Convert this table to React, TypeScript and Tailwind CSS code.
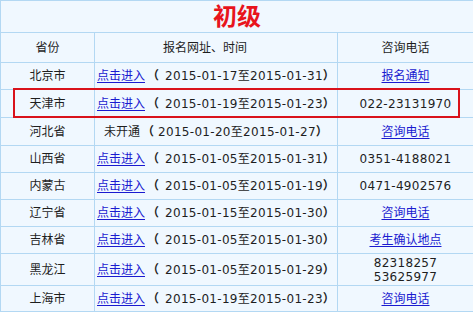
import React from "react";

type Row = {
  province: string;
  open: boolean;
  start: string;
  end: string;
  phone: string[];
  phoneLink?: boolean;
  h: string;
};

const ROWS: Row[] = [
  { province: "北京市", open: true, start: "2015-01-17", end: "2015-01-31", phone: ["报名通知"], phoneLink: true, h: "h-[27px]" },
  { province: "天津市", open: true, start: "2015-01-19", end: "2015-01-23", phone: ["022-23131970"], h: "h-[28px]" },
  { province: "河北省", open: false, start: "2015-01-20", end: "2015-01-27", phone: ["咨询电话"], phoneLink: true, h: "h-[28px]" },
  { province: "山西省", open: true, start: "2015-01-05", end: "2015-01-31", phone: ["0351-4188021"], h: "h-[27px]" },
  { province: "内蒙古", open: true, start: "2015-01-05", end: "2015-01-19", phone: ["0471-4902576"], h: "h-[27px]" },
  { province: "辽宁省", open: true, start: "2015-01-15", end: "2015-01-30", phone: ["咨询电话"], phoneLink: true, h: "h-[27px]" },
  { province: "吉林省", open: true, start: "2015-01-05", end: "2015-01-30", phone: ["考生确认地点"], phoneLink: true, h: "h-[27px]" },
  { province: "黑龙江", open: true, start: "2015-01-05", end: "2015-01-29", phone: ["82318257", "53625977"], h: "h-[32px]" },
  { province: "上海市", open: true, start: "2015-01-19", end: "2015-01-23", phone: ["咨询电话"], phoneLink: true, h: "h-[26px]" },
];

const font = { fontFamily: "'DejaVu Sans', 'Noto Sans CJK SC', sans-serif" };

const linkCls = "text-[#1a1ad0] underline underline-offset-2";

export default function App() {
  return (
    <div className="relative w-[473px] h-[312px] overflow-hidden bg-white">
      <div
        className="w-[480px] bg-[#f0f8ff] border-t border-l border-[#b3d8f3] text-[12px] text-[#1e1e1e]"
        style={font}
      >
        {/* title */}
        <div className="h-[32px] border-b border-[#b3d8f3] flex items-center justify-center pr-[7px]">
          <span className="text-[24px] font-semibold text-[#e8141c]">初级</span>
        </div>

        {/* header */}
        <div className="grid grid-cols-[94px_243px_1fr] h-[30px] border-b border-[#b3d8f3]">
          <div className="border-r border-[#b3d8f3] flex items-center justify-center">省份</div>
          <div className="border-r border-[#b3d8f3] flex items-center justify-center pr-[22px]">报名网址、时间</div>
          <div className="flex items-center justify-center pr-[7px]">咨询电话</div>
        </div>

        {ROWS.map((r) => (
          <div key={r.province} className={`grid grid-cols-[94px_243px_1fr] border-b border-[#b3d8f3] ${r.h}`}>
            <div className="border-r border-[#b3d8f3] flex items-center justify-center">{r.province}</div>
            <div className="border-r border-[#b3d8f3] flex items-center pl-[2px] whitespace-nowrap">
              {r.open ? (
                <a className={linkCls}>点击进入</a>
              ) : (
                <span className="pl-[7px]">未开通</span>
              )}
              <span className="ml-[2px] font-bold">（</span>
              <span className={`tracking-[0.3px] ${r.open ? "ml-[6px]" : "ml-[4px]"}`}>
                {r.start}至{r.end}
                <span className="font-bold">）</span>
              </span>
            </div>
            <div className="flex flex-col items-center justify-center pr-[7px] leading-[14px] tracking-[0.3px]">
              {r.phone.map((p) =>
                r.phoneLink ? (
                  <a key={p} className={`${linkCls} tracking-[0px]`}>
                    {p}
                  </a>
                ) : (
                  <span key={p}>{p}</span>
                )
              )}
            </div>
          </div>
        ))}
      </div>

      {/* highlight box around 天津市 */}
      <div className="absolute left-[13px] top-[88px] w-[447px] h-[30px] border-2 border-[#d9121b]" />
    </div>
  );
}
